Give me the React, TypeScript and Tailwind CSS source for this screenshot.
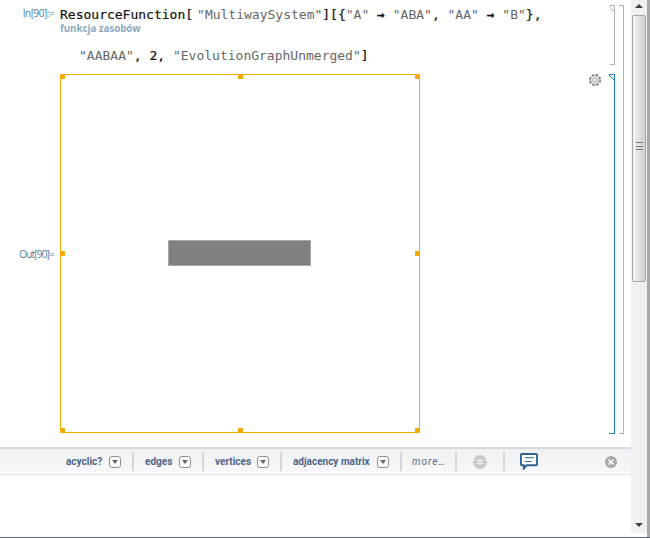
import React from 'react';

const mono = "font-['DejaVu_Sans_Mono',monospace]";
const str = "text-[#666] [-webkit-text-stroke:0]";

function Handle({ className }: { className: string }) {
    return <div className={`absolute w-[5px] h-[5px] bg-[#f5ab00] ${className}`} />;
}

function ImageFrame() {
    return (
        <div className="relative w-[360px] h-[359px] border border-[#f5ab00] flex items-center justify-center bg-white">
            <div className="w-[143px] h-[26px] bg-[#808080] border border-[#a8a8a8] mr-[1px] mb-[1px]" />
            <Handle className="-left-px -top-px" />
            <Handle className="left-[177px] -top-px" />
            <Handle className="-right-px -top-px" />
            <Handle className="-left-px top-[176px]" />
            <Handle className="-right-px top-[176px]" />
            <Handle className="-left-px -bottom-px" />
            <Handle className="left-[177px] -bottom-px" />
            <Handle className="-right-px -bottom-px" />
        </div>
    );
}

function Brackets() {
    return (
        <div className="w-[31px] shrink-0 flex pt-[5px] h-[434px]">
            <div className="w-[15px] flex flex-col items-end">
                <div className="relative w-[5px] h-[60px] border-t border-r border-b border-[#b4b4b4]">
                    <svg className="absolute right-0 top-0" width="5" height="5"><path d="M0 0 L5 5" stroke="#b4b4b4" strokeWidth="1" /></svg>
                </div>
                <div className="relative w-[6px] h-[360px] mt-[9px] border-t border-r border-b border-[#1b7fcc]">
                    <svg className="absolute right-0 top-0" width="5" height="5"><path d="M0 0 L5 5" stroke="#1b7fcc" strokeWidth="1" /></svg>
                </div>
            </div>
            <div className="w-[5px] ml-[4px] border-t border-r border-b border-[#b4b4b4]" />
        </div>
    );
}

function Notebook() {
    return (
        <div className="h-[447px] flex bg-white">
            <div className="w-[60px] shrink-0 font-['Open_Sans',sans-serif] text-[10px] tracking-[-0.8px] text-[#4f7ba0] text-right pr-[6px]">
                <div className="pt-[6px] leading-[14px] tracking-[-0.5px]">In[90]:=</div>
                <div className="mt-[227px] leading-[14px]">Out[90]=</div>
            </div>
            <div className="flex-1 min-w-0">
                <div className={`${mono} text-[13px] leading-[15px] pt-[7px] whitespace-pre text-[#111] [-webkit-text-stroke:0.2px]`}>
                    <span>ResourceFunction[</span>
                    <span className={`${str} ml-[4px]`}>"MultiwaySystem"</span>
                    <span>][{'{'}</span>
                    <span className={str}>"A"</span> <span className="font-bold">→</span> <span className={str}>"ABA"</span>, <span className={str}>"AA"</span> <span className="font-bold">→</span> <span className={str}>"B"</span>{'},'}
                </div>
                <div className="font-['Open_Sans',sans-serif] font-bold text-[9.7px] leading-[12px] text-[#8aa9c0] mt-[1px]">funkcja zasobów</div>
                <div className={`${mono} text-[13px] leading-[15px] mt-[13px] pl-[19px] whitespace-pre text-[#111] [-webkit-text-stroke:0.2px]`}>
                    <span className={str}>"AABAA"</span>, 2, <span className={str}>"EvolutionGraphUnmerged"</span>]
                </div>
                <div className="mt-[11px] flex">
                    <ImageFrame />
                    <div className="flex-1 flex justify-end mr-[-2px]">
                        <svg className="mt-[-1px]" width="14" height="14" viewBox="0 0 14 14" fill="none" stroke="#8c8c8c">
                            <circle cx="7" cy="7" r="5.200" strokeWidth="2" strokeDasharray="2.600 1.480" />
                            <circle cx="7" cy="7" r="4.300" strokeWidth="0.800" fill="#fff" />
                            <circle cx="7" cy="7" r="2.200" strokeWidth="1" />
                        </svg>
                    </div>
                </div>
            </div>
            <Brackets />
        </div>
    );
}

function MenuButton({ label, width }: { label: string; width: string }) {
    return (
        <div className={`flex items-center justify-between h-[19px] border-r-2 border-[#d4d7da] pr-[11px] ${width}`}>
            <span className="font-['Roboto',sans-serif] font-bold text-[10px] text-[#4c6488] whitespace-nowrap">{label}</span>
            <span className="w-[12px] h-[12px] border border-[#8f8f8f] rounded-[3px] bg-white flex items-center justify-center">
                <span className="w-0 h-0 border-l-[3.5px] border-r-[3.5px] border-t-[4px] border-l-transparent border-r-transparent border-t-[#666]" />
            </span>
        </div>
    );
}

function Toolbar() {
    return (
        <div className="h-[28px] flex items-center pl-[66px] border-t-2 border-b border-t-[#d4d7da] border-b-[#e2e4e6] bg-gradient-to-b from-[#eef0f3] to-[#f8f9fa]">
            <MenuButton label="acyclic?" width="w-[68px]" />
            <div className="w-[11px]" />
            <MenuButton label="edges" width="w-[59px]" />
            <div className="w-[11px]" />
            <MenuButton label="vertices" width="w-[67px]" />
            <div className="w-[11px]" />
            <MenuButton label="adjacency matrix" width="w-[109px]" />
            <div className="w-[10px]" />
            <div className="w-[45px] h-[19px] flex items-center border-r-2 border-[#d4d7da] font-['Roboto',sans-serif] italic text-[10px] tracking-[1px] text-[#566a88]">more…</div>
            <div className="w-[48px] h-[19px] flex items-center justify-center border-r-2 border-[#d4d7da]">
                <svg width="16" height="16" viewBox="0 0 16 16">
                    <path d="M8 0l1.500 2 2.300-1 .4 2.500 2.500.4-1 2.300 2 1.800-2 1.800 1 2.300-2.500.4-.4 2.500-2.300-1L8 16l-1.500-2-2.300 1-.4-2.500-2.500-.4 1-2.300-2-1.800 2-1.800-1-2.300 2.500-.4.4-2.500 2.300 1z" fill="#c9c9c9" />
                    <path d="M5 6.500h6M5 9.500h6" stroke="#f4f5f6" strokeWidth="1.300" />
                </svg>
            </div>
            <div className="w-[48px] flex justify-center">
                <svg width="18" height="17" viewBox="0 0 19 18">
                    <path d="M2 1h15a1 1 0 0 1 1 1v10a1 1 0 0 1-1 1H7l-3 3.500V13H2a1 1 0 0 1-1-1V2a1 1 0 0 1 1-1z" fill="#fff" stroke="#2f6490" strokeWidth="2" />
                    <path d="M5 5h10M5 9h7" stroke="#2f6490" strokeWidth="1.200" />
                </svg>
            </div>
            <div className="flex-1 flex justify-end pr-[14px]">
                <span className="w-[12px] h-[12px] rounded-full bg-[#a8a8a8] flex items-center justify-center">
                    <svg width="8" height="8" viewBox="0 0 8 8"><path d="M1.500 1.500l5 5M6.500 1.500l-5 5" stroke="#fff" strokeWidth="1.500" /></svg>
                </span>
            </div>
        </div>
    );
}

function Scrollbar() {
    return (
        <div className="w-[16px] shrink-0 h-[533px] bg-[#f0f0f0] flex flex-col">
            <div className="h-[12px] flex items-center justify-center">
                <span className="w-0 h-0 border-l-[4px] border-r-[4px] border-b-[4px] border-l-transparent border-r-transparent border-b-[#404040]" />
            </div>
            <div className="h-[267px] mt-[3px] mx-[1px] border border-[#a4a4a4] rounded-[2px] bg-gradient-to-r from-[#f4f4f4] to-[#cfcfcf] flex items-start justify-center pt-[126px]">
                <div className="w-[7px] h-[8px] border-y border-[#777] flex items-center">
                    <div className="w-full h-[1px] bg-[#777]" />
                </div>
            </div>
            <div className="flex-1" />
            <div className="h-[17px] flex items-center justify-center">
                <span className="w-0 h-0 border-l-[4px] border-r-[4px] border-t-[4px] border-l-transparent border-r-transparent border-t-[#404040]" />
            </div>
        </div>
    );
}

export default function App() {
    return (
        <div className="w-[650px] h-[538px] flex flex-col bg-white overflow-hidden">
            <div className="flex flex-1 min-h-0">
                <div className="w-[631px] shrink-0 flex flex-col">
                    <Notebook />
                    <Toolbar />
                </div>
                <Scrollbar />
                <div className="w-[3px] bg-[#a8a8a8]" />
            </div>
            <div className="h-[1px] bg-[#5a6472]" />
        </div>
    );
}
